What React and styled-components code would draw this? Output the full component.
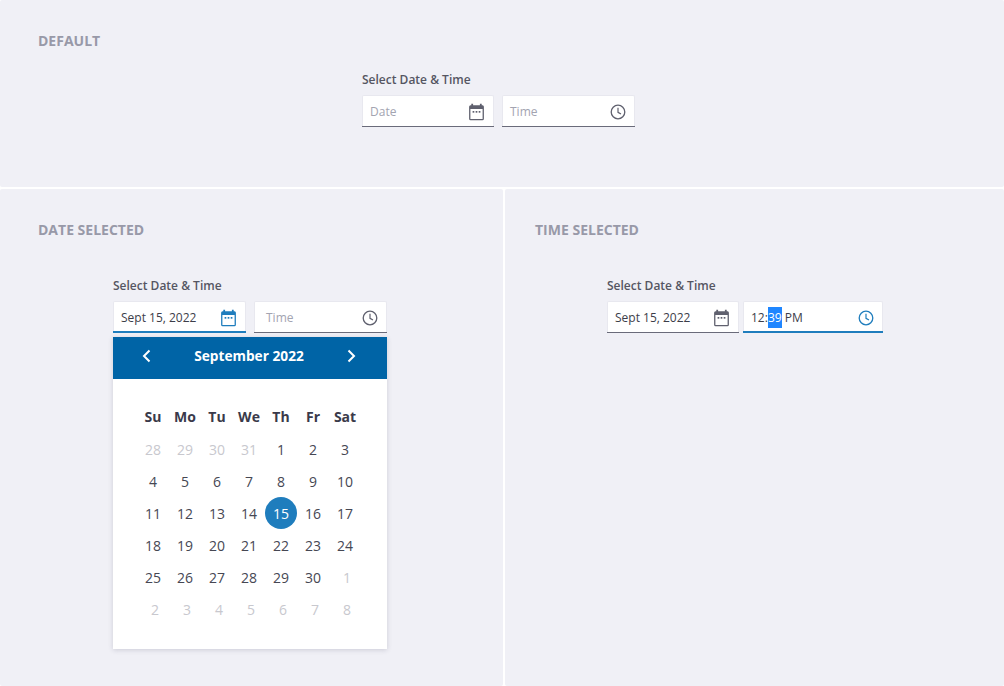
import React from "react";
import styled, { createGlobalStyle } from "styled-components";

const Global = createGlobalStyle`
  html, body { margin: 0; padding: 0; background: #fff; }
  body { font-family: "Open Sans", "Liberation Sans", sans-serif; }
  * { box-sizing: border-box; }
`;

const Page = styled.div`
  width: 1004px;
  height: 686px;
  display: grid;
  grid-template-columns: 503px 499px;
  grid-template-rows: 187px 497px;
  gap: 2px;
  overflow: hidden;
`;

const Panel = styled.section`
  background: #f0f0f6;
  border-radius: 2px;
  grid-column: ${(p) => p.$span || "auto"};
  padding: ${(p) => p.$top}px 0 0 ${(p) => p.$left}px;
`;

const Heading = styled.h2`
  margin: 0;
  font-size: 14px;
  line-height: 18px;
  font-weight: 700;
  color: #9899a8;
`;

const Picker = styled.div`
  margin: ${(p) => p.$top}px 0 0 ${(p) => p.$indent}px;
  width: ${(p) => p.$width}px;
`;

const Label = styled.div`
  font-size: 12px;
  line-height: 18px;
  font-weight: 600;
  color: #555662;
  margin-bottom: 6px;
`;

const Fields = styled.div`
  display: flex;
  gap: ${(p) => p.$gap}px;
`;

const Field = styled.div`
  width: ${(p) => p.$width}px;
  height: 32px;
  background: #fff;
  border: 1px solid #e8e8ef;
  border-bottom: 0;
  border-radius: 2px 2px 0 0;
  position: relative;
  display: flex;
  align-items: center;
  justify-content: space-between;
  padding: 0 7px;
  &::after {
    content: "";
    position: absolute;
    left: -1px;
    right: -1px;
    bottom: 0;
    height: ${(p) => (p.$active ? 2 : 1)}px;
    background: ${(p) => (p.$active ? "#1f7dbd" : "#6a6b7a")};
  }
`;

const Value = styled.span`
  font-size: 12px;
  line-height: 20px;
  color: ${(p) => (p.$placeholder ? "#a3a4b1" : "#3c3d49")};
  padding-left: ${(p) => p.$pad || 0}px;
  white-space: pre;
`;

const Selected = styled.span`
  display: inline-block;
  background: #1f86ff;
  color: #fff;
  line-height: 21px;
  height: 21px;
`;

const IconBox = styled.svg`
  width: 18px;
  height: 18px;
  flex: none;
  display: block;
  color: ${(p) => (p.$active ? "#1f7dbd" : "#5f606e")};
`;

const CalendarIcon = ({ active }) => (
  <IconBox $active={active} viewBox="0 0 18 18" fill="none">
    <path
      fill="currentColor"
      fillRule="evenodd"
      d="M3.300.8h1.800V2.300h6.800V.8h1.800V2.300h.5A1.500 1.500 0 0 1 15.900 3.800v12a1.500 1.500 0 0 1-1.500 1.500H2.600A1.500 1.500 0 0 1 1.100 15.800v-12A1.500 1.500 0 0 1 2.600 2.300h.7zM2.400 6v10h12.200V6z"
    />
    <rect x="4.600" y="8" width="1.700" height="1.700" fill="currentColor" />
    <rect x="7.650" y="8" width="1.700" height="1.700" fill="currentColor" />
    <rect x="10.700" y="8" width="1.700" height="1.700" fill="currentColor" />
  </IconBox>
);

const ClockIcon = ({ active }) => (
  <IconBox $active={active} viewBox="0 0 18 18" fill="none">
    <circle cx="9" cy="9" r="6.800" stroke="currentColor" strokeWidth="1.300" />
    <path d="M9 4.800V9.300l3 1.800" stroke="currentColor" strokeWidth="1.200" />
  </IconBox>
);

const Popup = styled.div`
  margin-top: 4px;
  width: 274px;
  height: 312px;
  background: #fff;
  box-shadow: 0 1px 5px rgba(60, 60, 90, 0.2);
`;

const PopupHeader = styled.div`
  height: 42px;
  background: #0064a6;
  display: flex;
  align-items: center;
  justify-content: space-between;
  padding: 0 28px 4px 26px;
  color: #fff;
`;

const Month = styled.div`
  font-size: 13.7px;
  font-weight: 700;
  line-height: 20px;
`;

const Chevron = styled.svg`
  width: 16px;
  height: 16px;
  display: block;
`;

const Grid = styled.div`
  display: grid;
  grid-template-columns: repeat(7, 32px);
  grid-auto-rows: 32px;
  padding: 22px 0 0 24px;
`;

const Head = styled.div`
  font-size: 14px;
  font-weight: 700;
  color: #3a3a4a;
  display: flex;
  align-items: center;
  justify-content: center;
  height: 32px;
  padding-bottom: 2px;
`;

const Day = styled.div`
  width: 32px;
  height: 32px;
  padding: 1px 0 0 ${(p) => (p.$trailing ? 4 : 0)}px;
  border-radius: 50%;
  display: flex;
  align-items: center;
  justify-content: center;
  font-size: 14px;
  background: ${(p) => (p.$selected ? "#1f7dbd" : "transparent")};
  color: ${(p) => (p.$selected ? "#fff" : p.$muted ? "#c8c8ce" : "#464753")};
`;

const heads = ["Su", "Mo", "Tu", "We", "Th", "Fr", "Sat"];
const days = [
  [28, "lead"], [29, "lead"], [30, "lead"], [31, "lead"],
  ...Array.from({ length: 30 }, (_, i) => [i + 1, ""]),
  ...Array.from({ length: 8 }, (_, i) => [i + 1, "trail"]),
];

export default function App() {
  return (
    <Page>
      <Global />
      <Panel $span="1 / 3" $top={32} $left={38}>
        <Heading>DEFAULT</Heading>
        <Picker $top={21} $indent={324} $width={273}>
          <Label>Select Date &amp; Time</Label>
          <Fields $gap={8}>
            <Field $width={132}>
              <Value $placeholder>Date</Value>
              <CalendarIcon />
            </Field>
            <Field $width={133}>
              <Value $placeholder>Time</Value>
              <ClockIcon />
            </Field>
          </Fields>
        </Picker>
      </Panel>
      <Panel $top={32} $left={38}>
        <Heading>DATE SELECTED</Heading>
        <Picker $top={38} $indent={75} $width={274}>
          <Label>Select Date &amp; Time</Label>
          <Fields $gap={8}>
            <Field $width={133} $active>
              <Value>Sept 15, 2022</Value>
              <CalendarIcon active />
            </Field>
            <Field $width={133}>
              <Value $placeholder $pad={4}>Time</Value>
              <ClockIcon />
            </Field>
          </Fields>
          <Popup>
            <PopupHeader>
              <Chevron viewBox="0 0 16 16" fill="none">
                <path d="M10.500 2.500 5 8l5.500 5.500" stroke="#fff" strokeWidth="2" />
              </Chevron>
              <Month>September 2022</Month>
              <Chevron viewBox="0 0 16 16" fill="none">
                <path d="M5.500 2.500 11 8l-5.500 5.500" stroke="#fff" strokeWidth="2" />
              </Chevron>
            </PopupHeader>
            <Grid>
              {heads.map((h) => (
                <Head key={h}>{h}</Head>
              ))}
              {days.map(([d, kind], i) => (
                <Day
                  key={i}
                  $muted={kind !== ""}
                  $trailing={kind === "trail"}
                  $selected={kind === "" && d === 15}
                >
                  {d}
                </Day>
              ))}
            </Grid>
          </Popup>
        </Picker>
      </Panel>
      <Panel $top={32} $left={30}>
        <Heading>TIME SELECTED</Heading>
        <Picker $top={38} $indent={72} $width={276}>
          <Label>Select Date &amp; Time</Label>
          <Fields $gap={4}>
            <Field $width={132}>
              <Value>Sept 15, 2022</Value>
              <CalendarIcon />
            </Field>
            <Field $width={140} $active>
              <Value>12:<Selected>39</Selected> PM</Value>
              <ClockIcon active />
            </Field>
          </Fields>
        </Picker>
      </Panel>
    </Page>
  );
}
